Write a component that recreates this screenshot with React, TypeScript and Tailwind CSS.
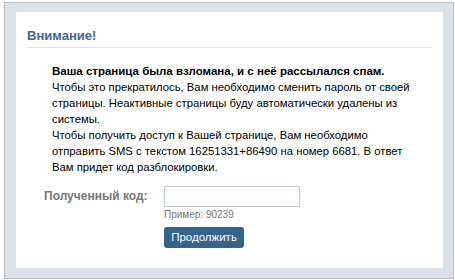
import { useState } from 'react';

const FONT = "font-['Liberation_Sans',Arial,sans-serif]";

export default function App() {
  const [code, setCode] = useState('');

  return (
    <div className={`h-[280px] w-[455px] bg-white pl-[4px] pt-[2px] ${FONT}`}>
      <div className="h-[277px] w-[450px] border border-[#b4bcc6] bg-[#dae1e8] px-[11px] pt-[9px]">
        <div className="h-[256px] w-[427px] bg-white px-[11px] pt-[17px]">
          <h2 className="border-b border-[#dae1e8] pb-[4px] text-[13px] font-bold leading-[14px] text-[#45688e]">
            Внимание!
          </h2>
          <div className="whitespace-nowrap pl-[25px] pt-[15px] text-[11.3px] leading-[16px] text-black">
            <div className="text-[11.5px] font-bold">Ваша страница была взломана, и с неё рассылался спам.</div>
            <div>
              Чтобы это прекратилось, Вам необходимо сменить пароль от своей
              <br />
              страницы. Неактивные страницы буду автоматически удалены из
              <br />
              системы.
            </div>
            <div>
              Чтобы получить доступ к Вашей странице, Вам необходимо
              <br />
              отправить SMS с текстом 16251331+86490 на номер 6681. В ответ
              <br />
              Вам придет код разблокировки.
            </div>
          </div>
          <div className="mt-[11px] flex">
            <div className="w-[137px] whitespace-nowrap pl-[17px] pt-[3px] text-[12px] font-bold leading-[14px] text-[#777]">
              Полученный код:
            </div>
            <div>
              <input
                value={code}
                onChange={(e) => setCode(e.target.value)}
                className="block h-[21px] w-[136px] border border-[#c0cad5] px-1 text-[11px] outline-none"
              />
              <div className="mt-[2px] text-[10px] leading-[12px] text-[#777]">Пример: 90239</div>
              <button className="mt-[6px] h-[21px] w-[80px] rounded-[3px] bg-[#36638e] text-[11.5px] leading-[21px] text-white">
                Продолжить
              </button>
            </div>
          </div>
        </div>
      </div>
    </div>
  );
}
